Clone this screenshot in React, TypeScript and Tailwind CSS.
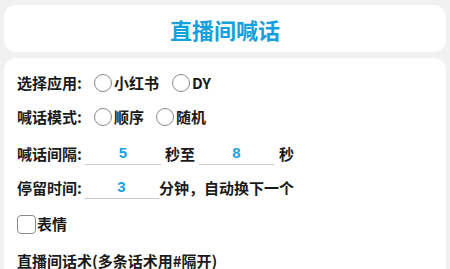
import React from 'react'

const font = { fontFamily: '"Noto Sans CJK SC", "Noto Sans", sans-serif' }

function Radio({ label }: { label: string }) {
  return (
    <label className="flex items-center">
      <span className="w-[18px] h-[18px] rounded-full border-[1.5px] border-[#8a8a8a] bg-white" />
      <span className="ml-[2px]">{label}</span>
    </label>
  )
}

function NumInput({ value, w }: { value: string; w: string }) {
  return (
    <span
      className={`${w} h-[22px] flex items-center justify-center border-b border-[#c8c8c8] text-[#1ba1e2] font-bold text-[15px]`}
      style={{ fontFamily: '"Liberation Sans", sans-serif' }}
    >
      {value}
    </span>
  )
}

export default function App() {
  return (
    <div className="w-[450px] h-[269px] overflow-hidden bg-[#f1f1f1] pt-[5px] px-[4px]" style={font}>
      {/* 标题 */}
      <div className="bg-white rounded-[12px] h-[47px] flex items-center justify-center">
        <h1 className="text-[22px] font-bold text-[#14a0dd] leading-none">直播间喊话</h1>
      </div>

      {/* 设置区域 */}
      <div className="mt-[6px] bg-white rounded-t-[12px] h-[220px] pl-[13px] pt-[13px] text-[15px] font-semibold text-[#1a1a1a]">
        <div className="h-[24px] flex items-center">
          <span>选择应用:</span>
          <div className="ml-[12px] flex items-center gap-[13px]">
            <Radio label="小红书" />
            <Radio label="DY" />
          </div>
        </div>

        <div className="mt-[10px] h-[24px] flex items-center">
          <span>喊话模式:</span>
          <div className="ml-[12px] flex items-center gap-[12px]">
            <Radio label="顺序" />
            <Radio label="随机" />
          </div>
        </div>

        <div className="mt-[13px] h-[24px] flex items-center">
          <span>喊话间隔:</span>
          <span className="ml-[3px]" />
          <NumInput value="5" w="w-[76px]" />
          <span className="ml-[4px]">秒至</span>
          <span className="ml-[4px]" />
          <NumInput value="8" w="w-[75px]" />
          <span className="ml-[5px]">秒</span>
        </div>

        <div className="mt-[10px] h-[24px] flex items-center">
          <span>停留时间:</span>
          <span className="ml-[2px]" />
          <NumInput value="3" w="w-[75px]" />
          <span>分钟，自动换下一个</span>
        </div>

        <div className="mt-[12px] h-[24px] flex items-center">
          <span className="w-[19px] h-[19px] rounded-[4px] border-[1.5px] border-[#8a8a8a]" />
          <span className="ml-[1px]">表情</span>
        </div>

        <div className="mt-[13px] h-[24px] flex items-center">
          <span>直播间话术(多条话术用#隔开)</span>
        </div>
      </div>
    </div>
  )
}
